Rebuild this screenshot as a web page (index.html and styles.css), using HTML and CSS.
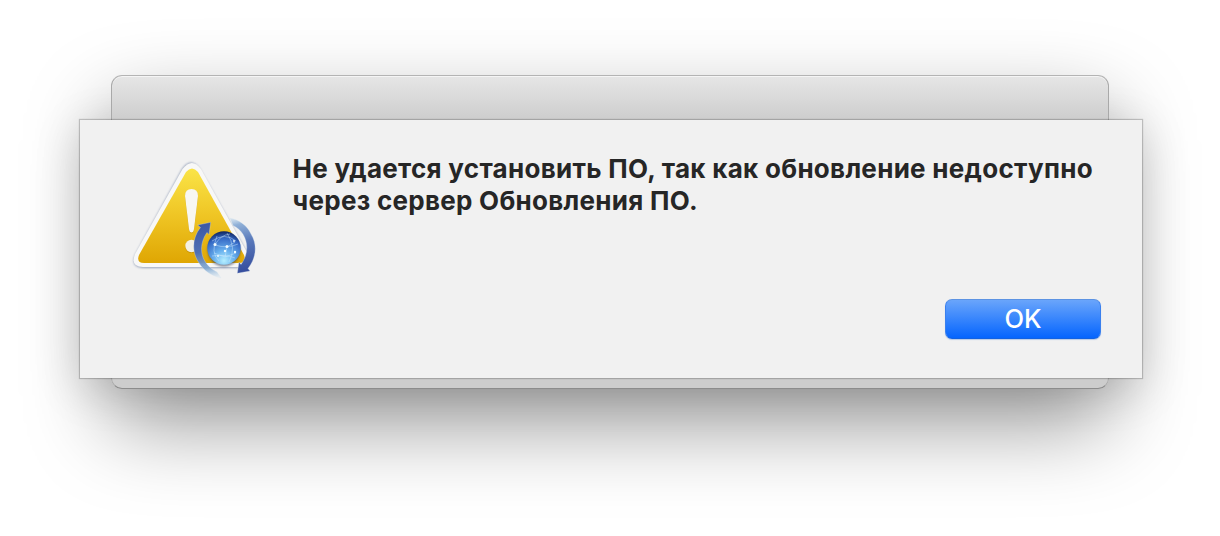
FILE: index.html
```html
<!DOCTYPE html>
<html lang="ru">
<head>
    <meta charset="UTF-8">
    <meta name="viewport" content="width=device-width, initial-scale=1.0">
    <title>Обновление ПО</title>
    <link rel="stylesheet" href="styles.css">
</head>
<body>

<div class="window">
    <div class="sheet">
        <!-- Предупреждение со значком обновления -->
        <svg class="alert-icon" width="150" height="140" viewBox="0 0 150 140">
            <defs>
                <linearGradient id="yellow" x1="0" y1="0" x2="0" y2="1">
                    <stop offset="0" stop-color="#fae447"/>
                    <stop offset="0.5" stop-color="#efc524"/>
                    <stop offset="1" stop-color="#dfa603"/>
                </linearGradient>
                <radialGradient id="globe" cx="0.5" cy="0.88" r="0.9">
                    <stop offset="0" stop-color="#b5efff"/>
                    <stop offset="0.35" stop-color="#68b0ee"/>
                    <stop offset="0.75" stop-color="#3568c4"/>
                    <stop offset="1" stop-color="#0b1d55"/>
                </radialGradient>
                <linearGradient id="arrow-left" gradientUnits="userSpaceOnUse" x1="85" y1="72" x2="96" y2="128">
                    <stop offset="0" stop-color="#3c57a5"/>
                    <stop offset="0.5" stop-color="#4f70b4"/>
                    <stop offset="0.8" stop-color="#7fa6d0" stop-opacity="0.9"/>
                    <stop offset="1" stop-color="#9dc7e8" stop-opacity="0.1"/>
                </linearGradient>
                <linearGradient id="arrow-right" gradientUnits="userSpaceOnUse" x1="125" y1="123" x2="112" y2="67">
                    <stop offset="0" stop-color="#344b9c"/>
                    <stop offset="0.55" stop-color="#5a7abb"/>
                    <stop offset="0.85" stop-color="#8badd6" stop-opacity="0.95"/>
                    <stop offset="1" stop-color="#a5c9e9" stop-opacity="0.2"/>
                </linearGradient>
                <filter id="soft" x="-20%" y="-20%" width="140%" height="140%">
                    <feGaussianBlur stdDeviation="1"/>
                </filter>
            </defs>
            <path d="M62 19Q71 6 80 19L128 104Q133 118 121 118H23Q10 117 15 105Z" fill="#7888a8" opacity="0.75" filter="url(#soft)"/>
            <path d="M62.500 19Q72 7 81 19L128 104Q133 117 121 117H23Q10 117 15 104Z" fill="#f8f8f7"/>
            <path d="M66 22Q72 15 78 22L124 105Q127 113 119 113H24Q16 113 19 105Z" fill="url(#yellow)"/>
            <path d="M65 46Q65 39 71.500 39T78 46L74 79Q73.500 82.500 71.500 82.500T69 79Z" fill="#a97d08" opacity="0.5" transform="translate(0 .8)"/>
            <path d="M65 46Q65 39 71.500 39T78 46L74 79Q73.500 82.500 71.500 82.500T69 79Z" fill="#f8f7f1"/>
            <circle cx="71.500" cy="96.800" r="6.300" fill="#b68506" opacity="0.6"/>
            <circle cx="71.500" cy="96" r="6.200" fill="#f3f0e5"/>
            <!-- Стрелки -->
            <path d="M90.700 72.300L77.700 75L80.500 77.500C72 88 71.500 102 79 113C84 121 91 125.500 101 128L97 122C81 114 77 97 87 82.500L89 84.500Z" fill="url(#arrow-left)" stroke="#d9e6f0" stroke-opacity="0.45" stroke-width="0.700"/>
            <path d="M117.300 123.300L130 121L128 118.500C136.500 108 137.500 94 131 84C127 75 119 70 110 68L113 75.500C127 82 131.500 100 121 114.500L119 112Z" fill="url(#arrow-right)" stroke="#d9e6f0" stroke-opacity="0.45" stroke-width="0.700"/>
            <!-- Глобус -->
            <circle cx="104" cy="100" r="16.500" fill="#37415a" opacity="0.6" filter="url(#soft)"/>
            <circle cx="104" cy="98" r="16.700" fill="url(#globe)"/>
            <g fill="none" stroke="#d0ebff" stroke-width="0.600" opacity="0.75">
                <path d="M92 91Q105 82 116 91M95 95Q107 99 118 94M92 106Q105 104 115 108M97 86Q90 103 99 111M107 83Q117 98 109 112M95 95Q100 85 110 84M107 97L115 92M107 97L105 107L94 103M105 107L116 103"/>
            </g>
            <g fill="#f4fdff">
                <circle cx="95" cy="94.500" r="1.500"/>
                <circle cx="107" cy="96.500" r="1.500"/>
                <circle cx="105" cy="101" r="1.200"/>
                <circle cx="115" cy="102" r="1.200"/>
                <circle cx="98" cy="106" r="0.900"/>
                <circle cx="114" cy="91" r="0.900"/>
            </g>
        </svg>

        <div class="content">
            <p class="message">Не удается установить ПО, так как обновление недоступно<br>через сервер Обновления ПО.</p>
            <button class="btn">OK</button>
        </div>
    </div>
</div>

</body>
</html>
```
FILE: styles.css
```css
body {
    margin: 0;
    height: 536px;
    overflow: hidden;
    background-color: #fff;
    font-family: Inter, "Liberation Sans", sans-serif;
    display: flex;
    justify-content: center;
    align-items: flex-start;
}

/* Окно под диалогом */
.window {
    box-sizing: border-box;
    width: 998px;
    height: 314px;
    margin-top: 75px;
    padding-top: 44px;
    border: 1px solid;
    border-color: #b4b4b4 #a9a9a9 #8c8c8c;
    border-radius: 11px;
    background: linear-gradient(#e6e6e6, #cdcdcd 44px, #cdcdcd);
    box-shadow: inset 0 1px 0 #f5f5f5, 0 36px 84px rgba(0, 0, 0, 0.4);
}

/* Диалог шире окна */
.sheet {
    position: relative;
    box-sizing: border-box;
    display: flex;
    width: 1062px;
    height: 258px;
    margin-left: -32px;
    padding: 30px 41px 0 40px;
    background-color: #f1f1f1;
    box-shadow: 0 0 1px 1px rgba(0, 0, 0, 0.2);
}

/* Тень диалога уходит за окно */
.sheet:before {
    content: "";
    position: absolute;
    z-index: -1;
    top: 0;
    left: 0;
    right: 0;
    bottom: 0;
    box-shadow: 0 10px 44px rgba(0, 0, 0, 0.16);
}

.alert-icon {
    flex: none;
}

.content {
    flex: 1;
    display: flex;
    flex-direction: column;
    padding: 3px 0 0 22.5px;
}

.message {
    margin: 0;
    font-size: 26px;
    font-weight: 700;
    line-height: 32px;
    letter-spacing: 0.29px;
    color: #262626;
    white-space: nowrap;
}

.btn {
    align-self: flex-end;
    width: 156px;
    height: 40px;
    margin-top: 82px;
    padding: 0 0 2px;
    border: 1px solid;
    border-color: #5c93e3 #3a80ee #1262e2;
    border-radius: 7px;
    background: linear-gradient(#6aa5fb, #0565fe);
    box-shadow: 0 1px 1px rgba(0, 80, 200, 0.25);
    color: #fff;
    font-family: inherit;
    font-size: 25.5px;
    font-weight: 500;
}
```
